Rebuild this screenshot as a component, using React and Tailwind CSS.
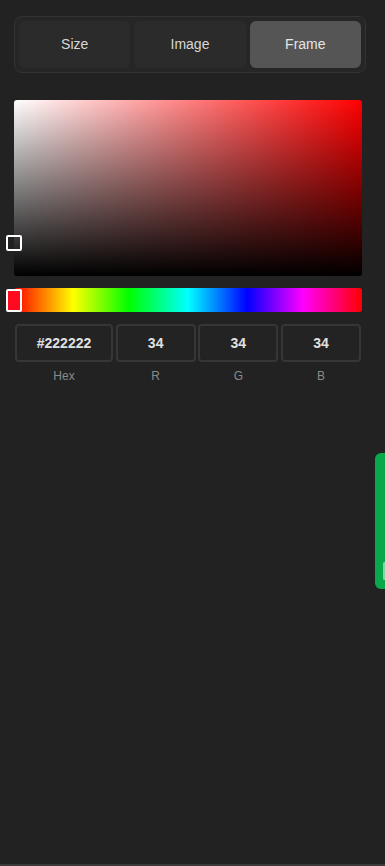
import React from "react";

export default function App() {
  const tabs = ["Size", "Image", "Frame"];
  return (
    <div className="relative w-[385px] h-[866px] bg-[#222222] overflow-hidden" style={{ fontFamily: '"Liberation Sans", Arial, sans-serif' }}>
      <div className="pt-4 pl-[14px] w-[366px]">
        <div className="flex gap-1 p-1 rounded-lg border border-[#333333] bg-[#262626] h-[57px]">
          {tabs.map((t) => (
            <div
              key={t}
              className={`flex-1 flex items-center justify-center rounded-md text-[14px] ${
                t === "Frame" ? "bg-[#555555] text-[#e6e6e6]" : "bg-[#2b2b2b] text-[#d8d8d8]"
              }`}
            >
              {t}
            </div>
          ))}
        </div>

        <div className="mr-1">
          <div className="relative mt-[27px] h-[176px] rounded-[3px]" style={{ background: "linear-gradient(to top, #000, rgba(0,0,0,0)), linear-gradient(to right, #fff, #ff0000)" }}>
            <div className="absolute left-[-8px] top-[135px] w-4 h-4 border-2 border-white rounded-[2px]" />
          </div>

          <div className="relative mt-3 h-6 rounded-[3px]" style={{ background: "linear-gradient(to right, #ff0000 0%, #ffff00 17%, #00ff00 33%, #00ffff 50%, #0000ff 67%, #ff00ff 83%, #ff0000 100%)" }}>
            <div className="absolute left-[-8px] top-[1px] w-4 h-[23px] border-2 border-white rounded-[2px] bg-[#ff0a1e]" />
          </div>

          <div className="flex justify-between mt-3 pl-[1px] pr-[1px]">
            {[
              ["#222222", "Hex", "w-[98px]"],
              ["34", "R", "w-[80px]"],
              ["34", "G", "w-[80px]"],
              ["34", "B", "w-[80px]"],
            ].map(([v, l, w]) => (
              <div key={l} className={`${w} flex flex-col items-center`}>
                <div className="w-full h-[38px] rounded-[4px] border-2 border-[#363636] bg-[#232323] flex items-center justify-center text-[14px] font-bold text-[#e0e0e0]">
                  {v}
                </div>
                <div className="mt-[5px] text-[12px] text-[#8a8a8a]">{l}</div>
              </div>
            ))}
          </div>
        </div>
      </div>

      <div className="absolute left-[375px] top-[453px] w-[14px] h-[136px] rounded-l-[6px] bg-[#0ba84a]">
        <div className="absolute left-[8px] top-[109px] w-[3px] h-[18px] rounded-full bg-[#7fd6a0]" />
      </div>

      <div className="absolute left-0 bottom-0 w-full h-[2px] bg-[#3a3a3a]" />
    </div>
  );
}
